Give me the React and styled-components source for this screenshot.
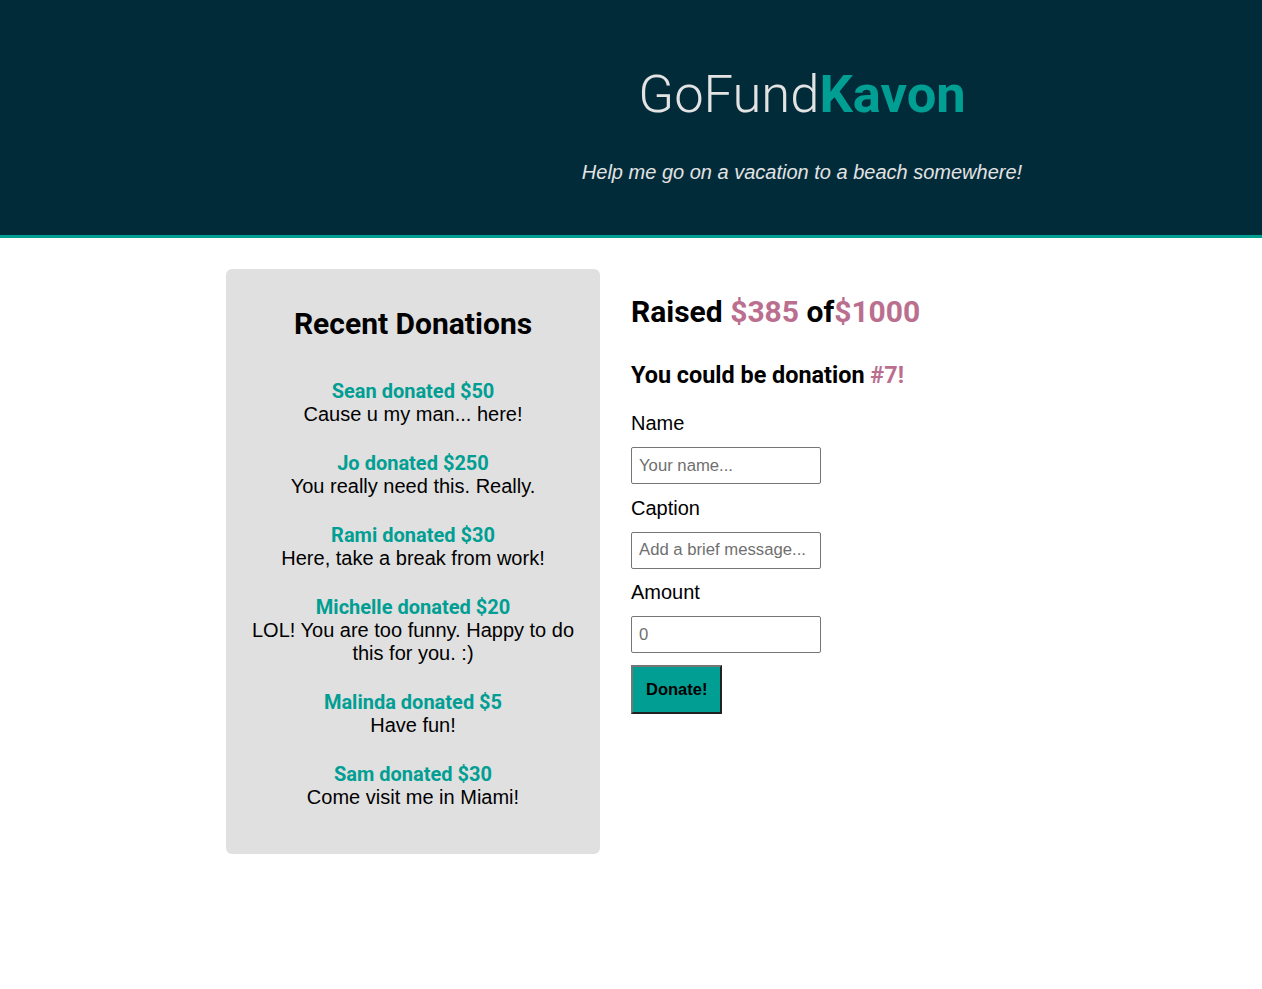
import React from "react";
import styled, { createGlobalStyle } from "styled-components";

const GlobalStyle = createGlobalStyle`
  html, body { margin: 0; padding: 0; background: #ffffff; }
  body { font-family: "Liberation Sans", Arial, sans-serif; color: #000; }
  * { box-sizing: border-box; }
`;

const TEAL = "#009e93";
const PINK = "#bb6f8f";

const Header = styled.header`
  background: #022b3a;
  border-bottom: 3px solid ${TEAL};
  height: 238px;
  padding: 59px 0 0 342px;
  text-align: center;
`;

const Title = styled.h1`
  margin: 0;
  font-family: Roboto, "Noto Sans", sans-serif;
  font-weight: 300;
  font-size: 52.5px;
  line-height: 70px;
  color: #e3e3e3;
`;

const Brand = styled.span`
  font-weight: 700;
  color: ${TEAL};
`;

const Tagline = styled.p`
  margin: 32px 0 0;
  font-family: "Liberation Sans", Arial, sans-serif;
  font-style: italic;
  font-size: 20px;
  line-height: 23px;
  color: #e3e3e3;
`;

const Main = styled.main`
  width: 810px;
  margin: 31px auto 0;
  display: grid;
  grid-template-columns: 374px 1fr;
  column-gap: 31px;
  align-items: start;
`;

const Card = styled.section`
  background: #e0e0e0;
  border-radius: 6px;
  padding: 37px 24px 45px;
  text-align: center;
`;

const CardTitle = styled.h2`
  margin: 0 0 39px;
  font-family: Roboto, "Noto Sans", sans-serif;
  font-weight: 700;
  font-size: 30px;
  line-height: 35px;
`;

const Donation = styled.div`
  & + & { margin-top: 25.6px; }
`;

const Donor = styled.div`
  font-family: Roboto, "Noto Sans", sans-serif;
  font-weight: 700;
  font-size: 20px;
  line-height: 23.4px;
  color: ${TEAL};
`;

const Comment = styled.div`
  font-size: 20px;
  line-height: 23px;
`;

const Side = styled.section`
  padding-top: 25px;
`;

const Raised = styled.h2`
  margin: 0;
  font-family: Roboto, "Noto Sans", sans-serif;
  font-weight: 700;
  font-size: 30px;
  line-height: 35px;
`;

const Next = styled.h3`
  margin: 32px 0 0;
  font-family: Roboto, "Noto Sans", sans-serif;
  font-weight: 700;
  font-size: 23.4px;
  line-height: 28px;
`;

const Accent = styled.span`
  color: ${PINK};
`;

const Form = styled.form`
  margin-top: 23px;
  display: flex;
  flex-direction: column;
  align-items: flex-start;
`;

const Label = styled.label`
  font-size: 20px;
  line-height: 23px;
  margin-bottom: 12px;
`;

const Input = styled.input`
  width: 190px;
  height: 37px;
  margin: 0 0 12.5px;
  padding: 0 7px;
  border: 1px solid #767676;
  border-radius: 2px;
  font-family: "Liberation Sans", Arial, sans-serif;
  font-size: 16.7px;
  color: #000;
  background: #fff;
  &::placeholder { color: #6f6f6f; }
`;

const Button = styled.button`
  height: 49px;
  margin-top: -0.5px;
  padding: 0 13px;
  background: ${TEAL};
  border: 2px solid;
  border-color: #767676 #222 #222 #767676;
  font-family: "Liberation Sans", Arial, sans-serif;
  font-weight: 700;
  font-size: 16.5px;
  color: #000;
  cursor: pointer;
`;

const donations = [
  { name: "Sean", amount: 50, text: "Cause u my man... here!" },
  { name: "Jo", amount: 250, text: "You really need this. Really." },
  { name: "Rami", amount: 30, text: "Here, take a break from work!" },
  { name: "Michelle", amount: 20, text: "LOL! You are too funny. Happy to do this for you. :)" },
  { name: "Malinda", amount: 5, text: "Have fun!" },
  { name: "Sam", amount: 30, text: "Come visit me in Miami!" },
];

export default function App() {
  return (
    <>
      <GlobalStyle />
      <Header>
        <Title>
          GoFund<Brand>Kavon</Brand>
        </Title>
        <Tagline>Help me go on a vacation to a beach somewhere!</Tagline>
      </Header>
      <Main>
        <Card>
          <CardTitle>Recent Donations</CardTitle>
          {donations.map((d) => (
            <Donation key={d.name}>
              <Donor>
                {d.name} donated ${d.amount}
              </Donor>
              <Comment>{d.text}</Comment>
            </Donation>
          ))}
        </Card>
        <Side>
          <Raised>
            Raised <Accent>$385</Accent> of<Accent>$1000</Accent>
          </Raised>
          <Next>
            You could be donation <Accent>#7!</Accent>
          </Next>
          <Form onSubmit={(e) => e.preventDefault()}>
            <Label htmlFor="name">Name</Label>
            <Input id="name" type="text" placeholder="Your name..." />
            <Label htmlFor="caption">Caption</Label>
            <Input id="caption" type="text" placeholder="Add a brief message..." />
            <Label htmlFor="amount">Amount</Label>
            <Input id="amount" type="number" placeholder="0" />
            <Button type="submit">Donate!</Button>
          </Form>
        </Side>
      </Main>
    </>
  );
}
